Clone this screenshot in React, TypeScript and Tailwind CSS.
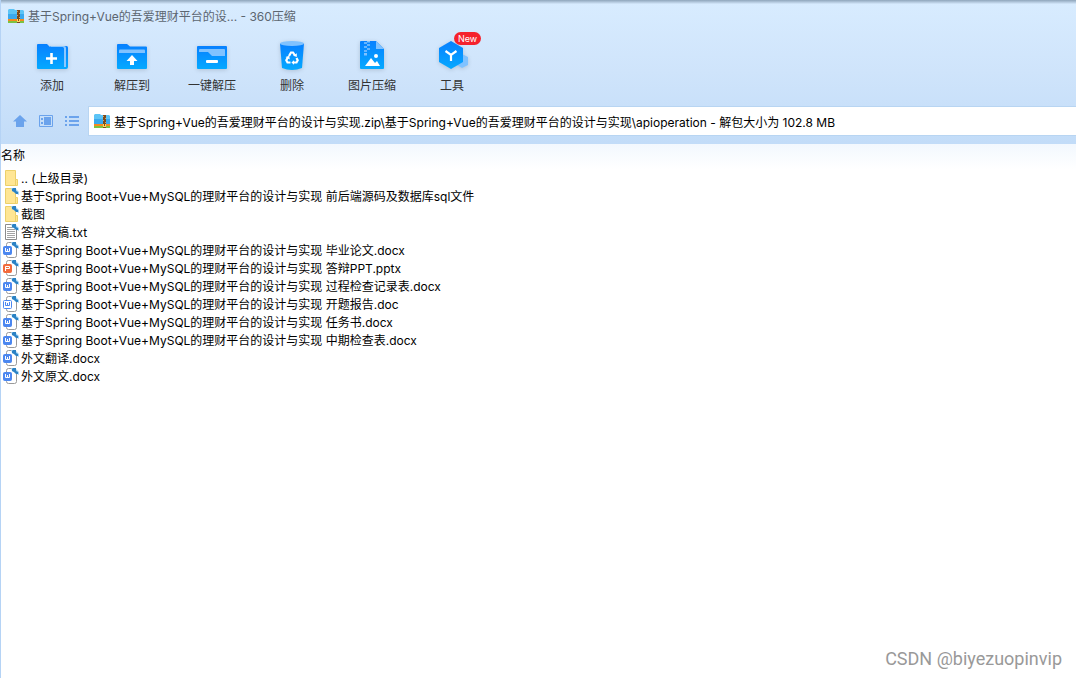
import type { ReactNode } from 'react';

type FileKind = 'folder' | 'linkedFolder' | 'text' | 'docx' | 'doc' | 'ppt';

const prefix = '基于Spring Boot+Vue+MySQL的理财平台的设计与实现';

const files: { name: string; kind: FileKind }[] = [
  { name: '.. (上级目录)', kind: 'folder' },
  { name: `${prefix} 前后端源码及数据库sql文件`, kind: 'linkedFolder' },
  { name: '截图', kind: 'linkedFolder' },
  { name: '答辩文稿.txt', kind: 'text' },
  { name: `${prefix} 毕业论文.docx`, kind: 'docx' },
  { name: `${prefix} 答辩PPT.pptx`, kind: 'ppt' },
  { name: `${prefix} 过程检查记录表.docx`, kind: 'docx' },
  { name: `${prefix} 开题报告.doc`, kind: 'doc' },
  { name: `${prefix} 任务书.docx`, kind: 'docx' },
  { name: `${prefix} 中期检查表.docx`, kind: 'docx' },
  { name: '外文翻译.docx', kind: 'docx' },
  { name: '外文原文.docx', kind: 'docx' },
];

// Toolbar icons all share a 32x32 box and the same blue gradient
const tools: { label: string; isNew?: boolean; icon: ReactNode }[] = [
  {
    label: '添加',
    icon: (
      <>
        <path d="M14 6h16.500a1.500 1.500 0 0 1 1.500 1.500V27a2 2 0 0 1-2 2H14z" fill="url(#tool-blue)" />
        <path d="M14 6h14a2 2 0 0 1 2 2v19h-2z" fill="#8cc8ff" />
        <path d="M1 5a1 1 0 0 1 1-1h9l3 3h12.500a1.500 1.500 0 0 1 1.500 1.500V29H2a1 1 0 0 1-1-1z" fill="url(#tool-blue)" />
        <path d="M15.500 13v11M10 18.500h11" stroke="#fff" strokeWidth="2.600" />
      </>
    ),
  },
  {
    label: '解压到',
    icon: (
      <>
        <path d="M1 5a1 1 0 0 1 1-1h9l3 2.500h16a1 1 0 0 1 1 1V28a1 1 0 0 1-1 1H2a1 1 0 0 1-1-1z" fill="url(#tool-blue)" />
        <path d="M3 13v-2.500a1 1 0 0 1 1-1h24a1 1 0 0 1 1 1V13z" fill="#80c2ff" />
        <path d="M16 15l5.500 6H18v4h-4v-4h-3.500z" fill="#fff" />
      </>
    ),
  },
  {
    label: '一键解压',
    icon: (
      <>
        <rect x="1" y="6" width="30" height="23" rx="1" fill="url(#tool-blue)" />
        <path d="M3 10a1 1 0 0 1 1-1h24a1 1 0 0 1 1 1v6H16l-4-4H3z" fill="#80c2ff" />
        <rect x="10" y="20" width="12" height="3" rx="1" fill="#fff" />
      </>
    ),
  },
  {
    label: '删除',
    icon: (
      <>
        <path d="M4 3.500h24L26 28q-10 4-20 0z" fill="url(#tool-blue)" />
        <ellipse cx="16" cy="3.500" rx="12" ry="2.500" fill="#80c2ff" />
        <g fill="none" stroke="#fff" strokeWidth="2.200">
          <path d="M13 16l2-3.500h2l2 3" />
          <path d="M20.500 18l1.200 2.200-1.200 2.300H17.500" />
          <path d="M14.500 22.500h-3l-1.200-2.300 1.500-2.700" />
        </g>
        <path d="M20.800 13.200v3.800l-3.600-1.200zM18 20.200v4.600l-2.600-2.300zM9.500 17l3.700-1.200.600 3.600z" fill="#fff" />
      </>
    ),
  },
  {
    label: '图片压缩',
    icon: (
      <>
        <path d="M5 1h15l8 8v19a1 1 0 0 1-1 1H5a1 1 0 0 1-1-1V2a1 1 0 0 1 1-1z" fill="url(#tool-blue)" />
        <path d="M20 1l8 8h-8z" fill="#80c2ff" />
        <path d="M8 2h3v2H8zM11 4h3v2h-3zM8 6h3v2H8zM11 8h3v2h-3zM8 10h3v2H8z" fill="#66b5ff" />
        <path d="M11 1h3v1.500h-3zM8 13h3v2.500H8z" fill="#80c2ff" />
        <circle cx="20" cy="16" r="2" fill="#fff" />
        <path d="M9 26l6-8 4 5 2-2 3 5z" fill="#fff" />
      </>
    ),
  },
  {
    label: '工具',
    isNew: true,
    icon: (
      <>
        <path d="M26 14l6 3v8l-6 3-5-3z" fill="#80c2ff" />
        <path d="M15 1l12 7v14l-12 7-12-7V8z" fill="url(#tool-blue)" />
        <path d="M9.500 11l5.500 4 5.500-4M15 15v6" fill="none" stroke="#fff" strokeWidth="2.200" />
      </>
    ),
  },
];

function ArchiveIcon() {
  return (
    <svg className="size-4 shrink-0" viewBox="0 0 16 16" aria-hidden="true">
      <path d="M0 2l1-1h5l1 1h8l1 1v8H0z" fill="#5cc4f6" />
      <path d="M0 6h16v5H0z" fill="#3aa9ee" />
      <path d="M0 11h16v2H0z" fill="#f58a1f" />
      <path d="M0 13h16v2H0z" fill="#7cc242" />
      <path d="M9 2h3v13H9z" fill="#7b4a1e" />
      <path d="M9 3h1v1H9zM11 5h1v1h-1zM9 7h1v1H9zM11 9h1v1h-1z" fill="#d9a05b" />
      <path d="M9 11h3v3H9z" fill="#ffd75e" />
      <path d="M10 11h1v2h-1z" fill="#7b4a1e" />
    </svg>
  );
}

const badgeStyles = {
  docx: { fill: '#4b87f0', border: '#4b87f0', glyph: '#fff' },
  doc: { fill: '#fff', border: '#4b87f0', glyph: '#4b87f0' },
  ppt: { fill: '#f26a3c', border: '#f26a3c', glyph: '#fff' },
};

function LinkMark() {
  return (
    <>
      <path d="M8 0h4l4 4v3l-2-1-3-2-2-1z" fill="#a3d5f7" />
      <path d="M9 1l1-1h3v3l2 1v2h-2l-2-2-2-1z" fill="#2b82c4" />
    </>
  );
}

function FileIcon({ kind }: { kind: FileKind }) {
  if (kind === 'folder' || kind === 'linkedFolder') {
    return (
      <svg className="size-4 shrink-0" viewBox="0 0 16 16" aria-hidden="true">
        <path d="M2.500.500h10v9h2v6h-12z" fill="#ffe694" stroke="#ecd06a" />
        <path d="M12.500 15v-5.500" fill="none" stroke="#ecd06a" />
        {kind === 'linkedFolder' && <LinkMark />}
      </svg>
    );
  }
  if (kind === 'text') {
    return (
      <svg className="size-4 shrink-0" viewBox="0 0 16 16" aria-hidden="true">
        <path d="M2.500.500h8l3 3v12h-11z" fill="#fff" stroke="#8b8b8b" />
        <path d="M4 3.500h6M4 5.500h8M4 7.500h8M4 9.500h8M4 11.500h8M4 13.500h8" stroke="#a3a3a3" />
        <LinkMark />
      </svg>
    );
  }
  const badge = badgeStyles[kind];
  return (
    <svg className="size-4 shrink-0" viewBox="0 0 16 16" aria-hidden="true">
      <path d="M5.500.500h5l3 4v9q0 2-2 2h-6q-2 0-2-2v-11q0-2 2-2z" fill="#fff" stroke="#9a9a9a" />
      <rect x=".5" y="4.500" width="8" height="8" rx="1" fill={badge.fill} stroke={badge.border} />
      {kind === 'ppt' ? (
        <path d="M2.500 11V6.500h4v2h-4" fill="none" stroke={badge.glyph} />
      ) : (
        <path d="M2.500 6v3.500h4V6M4.500 7v3" fill="none" stroke={badge.glyph} />
      )}
      <LinkMark />
    </svg>
  );
}

export default function App() {
  return (
    <div className="flex min-h-screen flex-col border-l border-[#b5d3f5] bg-white font-['Inter','Noto_Sans_CJK_SC',sans-serif] text-xs text-black">
      <svg className="absolute size-0" aria-hidden="true">
        <defs>
          <linearGradient id="tool-blue" x1="0" y1="0" x2="0" y2="1">
            <stop offset="0" stopColor="#0780ff" />
            <stop offset="1" stopColor="#05a9ff" />
          </linearGradient>
        </defs>
      </svg>

      <header className="bg-linear-to-b from-[#d8ecff] via-[#cfe4fb] to-[#c2dcf8]">
        <div className="h-1 bg-linear-to-b from-[#8fa5bb] to-[#d5e9fc]" />
        <h1 className="flex h-6 items-center gap-1 pl-[7px] text-[#5c6670]">
          <ArchiveIcon />
          <span className="pt-[2px]">基于Spring+Vue的吾爱理财平台的设... - 360压缩</span>
        </h1>

        <nav className="flex pt-3 pb-[11px] pl-[11px]">
          {tools.map((tool) => (
            <button key={tool.label} type="button" className="relative flex w-20 flex-col items-center gap-[5px] text-[#333]">
              <svg className="size-8 overflow-visible drop-shadow-sm" viewBox="0 0 32 32" aria-hidden="true">
                {tool.icon}
              </svg>
              <span className="leading-[18px]">{tool.label}</span>
              {tool.isNew && (
                <span className="absolute -top-2 left-[42px] rounded-full bg-[#f5222d] px-1 text-[9px] leading-[13px] text-white">
                  New
                </span>
              )}
            </button>
          ))}
        </nav>

        <div className="flex items-center gap-3 pb-2 pl-3 text-[#6ba3ec]">
          <button type="button" aria-label="上级目录" className="w-[14px]">
            <svg className="h-[14px] w-[14px]" viewBox="0 0 14 14" fill="currentColor">
              <path d="M7 1l7 6.500h-3V13H3V7.500H0z" />
            </svg>
          </button>
          <button type="button" aria-label="图标视图" className="w-[14px]">
            <svg className="h-[14px] w-[14px]" viewBox="0 0 14 14" fill="currentColor">
              <path d="M.500 1.500h13v11H.500z" fill="none" stroke="currentColor" />
              <path d="M2 4h2v2H2zM2 8h2v2H2zM5 3h7v8H5z" />
            </svg>
          </button>
          <button type="button" aria-label="列表视图" className="w-[14px]">
            <svg className="h-[14px] w-[14px]" viewBox="0 0 14 14" fill="currentColor">
              <path d="M0 2h2v2H0zM4 2h10v2H4zM0 6h2v2H0zM4 6h10v2H4zM0 10h2v2H0zM4 10h10v2H4z" />
            </svg>
          </button>
          <label className="-ml-[3px] flex h-[30px] flex-1 items-center gap-1 border border-r-0 border-[#b8d5f2] bg-white pl-[5px] text-black">
            <ArchiveIcon />
            <input
              type="text"
              readOnly
              aria-label="路径"
              className="h-full min-w-0 flex-1 bg-transparent outline-none"
              value="基于Spring+Vue的吾爱理财平台的设计与实现.zip\基于Spring+Vue的吾爱理财平台的设计与实现\apioperation - 解包大小为 102.8 MB"
            />
          </label>
        </div>
      </header>

      <main className="flex-1">
        <table className="w-full border-collapse">
          <thead>
            <tr className="bg-linear-to-b from-[#f2f8fe] to-white">
              <th scope="col" className="h-[25px] p-0 text-left align-top font-normal leading-6">名称</th>
            </tr>
          </thead>
          <tbody>
            {files.map((file) => (
              <tr key={file.name}>
                <td className="p-0">
                  <div className="flex h-[18px] items-center gap-[2px] pl-[2px] whitespace-nowrap">
                    <FileIcon kind={file.kind} />
                    <span className="pt-[2px]">{file.name}</span>
                  </div>
                </td>
              </tr>
            ))}
          </tbody>
        </table>
      </main>

      <footer className="pr-[14px] pb-[7px] text-right font-['Roboto',sans-serif] text-lg leading-6 text-[#999]">
        CSDN @biyezuopinvip
      </footer>
    </div>
  );
}
